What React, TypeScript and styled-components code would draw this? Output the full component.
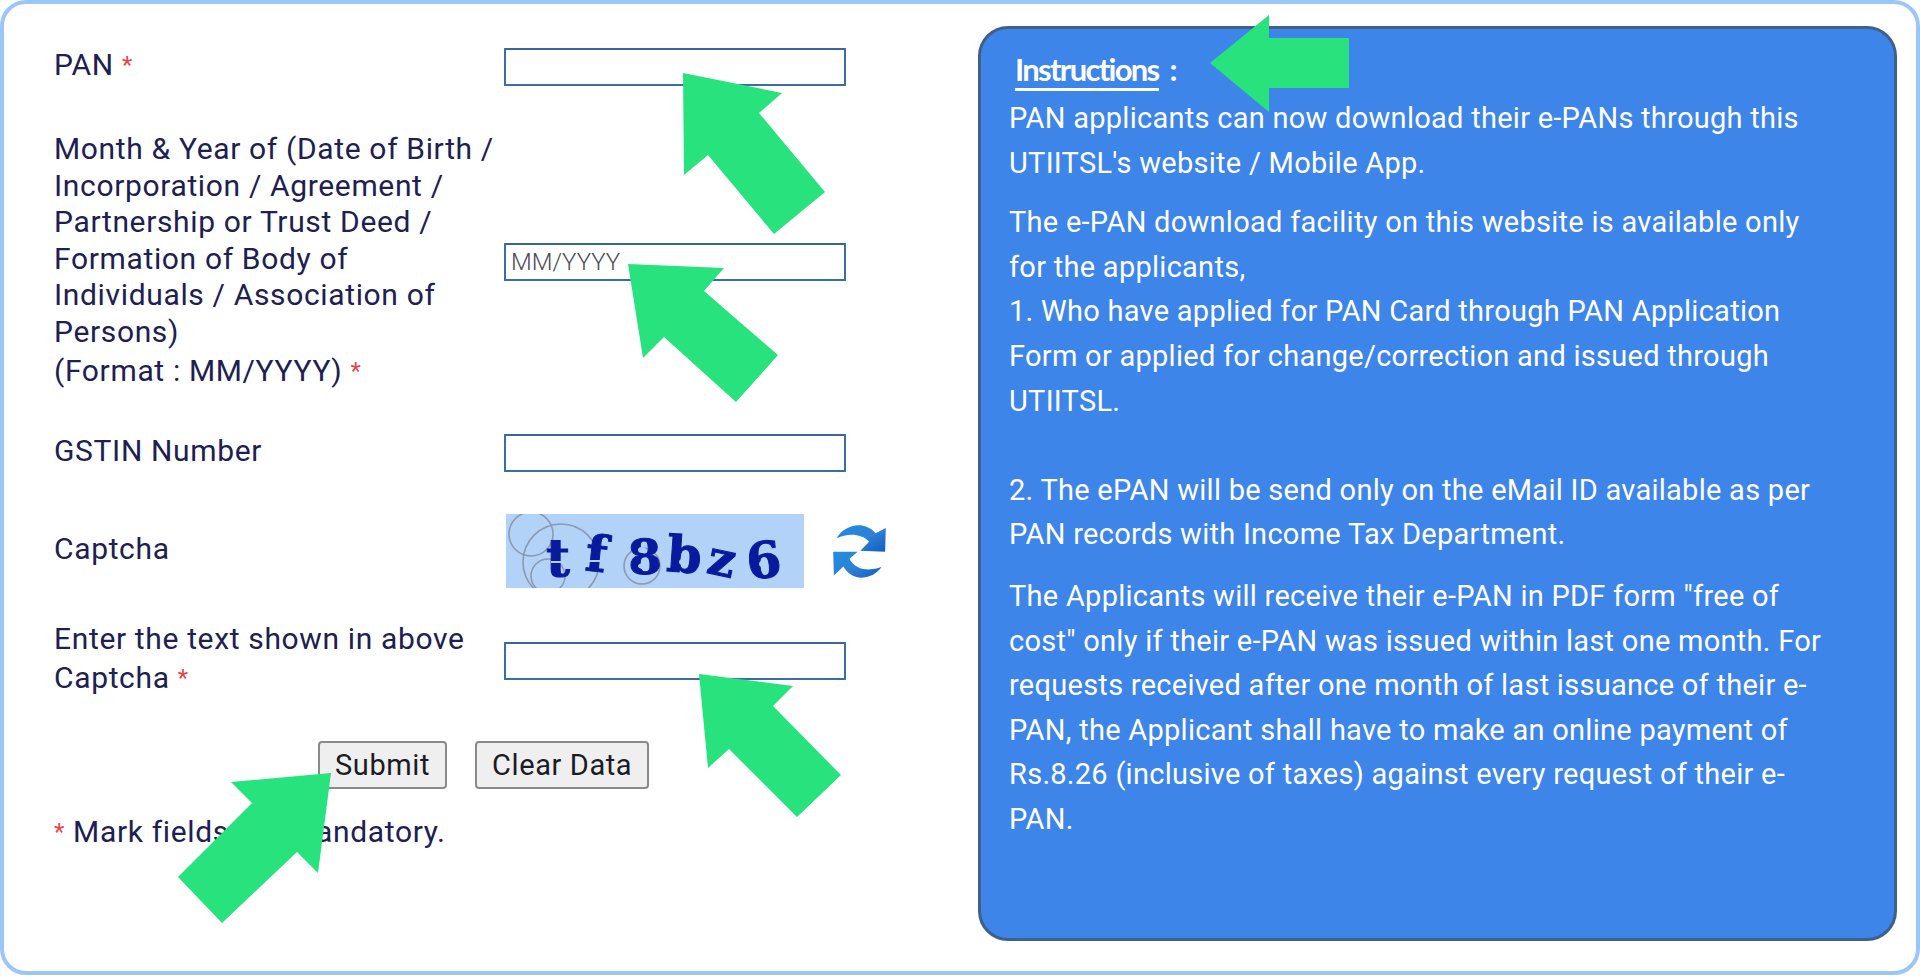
import React from "react";
import styled, { createGlobalStyle } from "styled-components";

const Global = createGlobalStyle`
  html, body { margin: 0; padding: 0; background: #fff; }
  body { font-family: Roboto, "Liberation Sans", sans-serif; }
  * { box-sizing: border-box; }
`;

const Frame = styled.div`
  position: relative;
  width: 1920px;
  height: 975px;
  background: #fff;
  border: 4px solid #9cc6f3;
  border-radius: 26px;
  display: flex;
  align-items: flex-start;
  color: #1d2050;
  font-size: 30px;
  letter-spacing: 0.65px;
`;

const FormColumn = styled.div`
  width: 974px;
  flex: none;
  padding: 44px 0 0 50px;
  display: flex;
  flex-direction: column;
`;

const Row = styled.div<{ $top: number }>`
  display: flex;
  align-items: center;
  margin-top: ${(p) => p.$top}px;
`;

const Label = styled.div`
  width: 450px;
  flex: none;
  margin-top: -4px;
  line-height: 36.6px;
`;

const LastLine = styled.span`
  display: inline-block;
  margin-top: 2px;
`;

const Star = styled.span`
  color: #e5444a;
  font-size: 24px;
  vertical-align: 2px;
`;

const Input = styled.input`
  width: 342px;
  height: 38px;
  padding: 0 5px;
  background: #fff;
  border: 2.5px solid #3b6ea5;
  border-top-color: #3a649b;
  border-radius: 1px;
  font-family: Roboto, sans-serif;
  font-size: 24px;
  font-weight: 300;
  letter-spacing: 0;
  &::placeholder { color: #4a4a58; opacity: 1; }
`;

const CaptchaBox = styled.div`
  display: flex;
  align-items: center;
  gap: 29px;
  margin-left: 2px;
`;

const Actions = styled.div`
  display: flex;
  gap: 28px;
  margin: 45px 0 0 264px;
`;

const Button = styled.button`
  height: 48px;
  padding: 0 15px;
  background: #efefef;
  border: 2px solid #8a8a8a;
  border-radius: 4px;
  color: #1b1b25;
  font-family: Roboto, sans-serif;
  font-size: 29px;
  letter-spacing: 0.6px;
`;

const Note = styled.div`
  margin-top: 25px;
  line-height: 36px;
`;

const Panel = styled.section`
  width: 919px;
  height: 915px;
  flex: none;
  margin-top: 22px;
  padding: 18px 28px 0 28px;
  background: #3d85e8;
  border: 3px solid #3f5f8c;
  border-radius: 30px;
  color: #fff;
  font-size: 29px;
  letter-spacing: 0.27px;
  line-height: 44.6px;
`;

const Heading = styled.div`
  margin-left: 6px;
  font-family: Lato, sans-serif;
  font-size: 31px;
  font-weight: 700;
  letter-spacing: -1.7px;
  line-height: 44px;
  height: 49px;
`;

const HeadingWord = styled.span`
  display: inline-block;
  border-bottom: 3px solid #fff;
  line-height: 37px;
  margin-right: 11px;
`;

const Para = styled.p<{ $gap: number }>`
  margin: ${(p) => p.$gap}px 0 0;
`;

const ArrowLayer = styled.svg`
  position: absolute;
  left: -4px;
  top: -4px;
  pointer-events: none;
`;

const arrows = [
  "683,73 782,93 759,113 825,192 774,234 708,155 684,175",
  "628,264 724,268 704,291 778,355 736,402 664,337 643,358",
  "699,674 793,686 773,706 841,775 797,817 729,749 708,768",
  "331,773 231,782 252,803 178,877 222,923 297,852 318,873",
  "1210,63 1269,15 1269,38 1349,38 1349,88 1269,88 1269,112",
];

const glyphs: [string, number, number, number, number][] = [
  ["t", 40, 62, 0, 52],
  ["f", 80, 58, 6, 50],
  ["8", 122, 60, -3, 48],
  ["b", 161, 58, 4, 50],
  ["z", 203, 62, 12, 48],
  ["6", 240, 64, -6, 50],
];

const CaptchaImage = () => (
  <svg width="298" height="74" viewBox="0 0 298 74" role="img" aria-label="captcha">
    <rect width="298" height="74" fill="#b3d2f7" />
    <g fill="none" stroke="#8a9ab0" strokeWidth="1.6">
      <circle cx="25" cy="20" r="22" />
      <circle cx="55" cy="48" r="38" />
      <circle cx="42" cy="62" r="17" />
      <circle cx="136" cy="52" r="18" />
    </g>
    <g fontFamily="'DejaVu Serif', serif" fontWeight="700" fill="#0a1a9c" stroke="#0a1a9c" strokeWidth="1">
      {glyphs.map(([c, x, y, r, s]) => (
        <text key={c} x={x} y={y} fontSize={s} transform={`rotate(${r} ${x + 15} ${y - 20})`}>
          {c}
        </text>
      ))}
    </g>
    <g fill="#b3d2f7">
      <ellipse cx="136" cy="36" rx="4" ry="3" />
      <ellipse cx="137" cy="52" rx="5" ry="3" />
      <ellipse cx="177" cy="48" rx="4" ry="3" />
      <ellipse cx="257" cy="50" rx="4" ry="3" />
      <rect x="45" y="47" width="22" height="2" />
      <rect x="82" y="46" width="20" height="2" />
    </g>
  </svg>
);

const RefreshIcon = () => (
  <svg width="53" height="56" viewBox="0 0 155 165" aria-label="refresh">
    <defs>
      <linearGradient id="rf" x1="0" y1="0" x2="1" y2="1">
        <stop offset="0" stopColor="#1e8fe0" />
        <stop offset="0.55" stopColor="#2f7fd6" />
        <stop offset="1" stopColor="#0e5fc0" />
      </linearGradient>
    </defs>
    <path fill="url(#rf)" d="M10 45C30 8 88 -12 125 30L155 15L153 85L80 82L106 55C82 30 42 30 10 45Z" />
    <path fill="url(#rf)" d="M142 130C120 165 58 178 30 128L2 155L0 85L72 85L48 105C66 140 108 142 142 130Z" />
  </svg>
);

export default function App() {
  return (
    <>
      <Global />
      <Frame>
        <FormColumn>
          <Row $top={0}>
            <Label>PAN <Star>*</Star></Label>
            <Input />
          </Row>
          <Row $top={49}>
            <Label>
              Month &amp; Year of (Date of Birth /<br />
              Incorporation / Agreement /<br />
              Partnership or Trust Deed /<br />
              Formation of Body of<br />
              Individuals / Association of<br />
              Persons)<br />
              <LastLine>(Format : MM/YYYY) <Star>*</Star></LastLine>
            </Label>
            <Input placeholder="MM/YYYY" />
          </Row>
          <Row $top={45}>
            <Label>GSTIN Number</Label>
            <Input />
          </Row>
          <Row $top={42}>
            <Label>Captcha</Label>
            <CaptchaBox>
              <CaptchaImage />
              <RefreshIcon />
            </CaptchaBox>
          </Row>
          <Row $top={37}>
            <Label>
              Enter the text shown in above<br />
              <LastLine>Captcha <Star>*</Star></LastLine>
            </Label>
            <Input />
          </Row>
          <Actions>
            <Button>Submit</Button>
            <Button>Clear Data</Button>
          </Actions>
          <Note><Star>*</Star> Mark fields are mandatory.</Note>
        </FormColumn>
        <Panel>
          <Heading><HeadingWord>Instructions</HeadingWord>:</Heading>
          <Para $gap={0}>PAN applicants can now download their e-PANs through this<br />UTIITSL's website / Mobile App.</Para>
          <Para $gap={15}>The e-PAN download facility on this website is available only<br />for the applicants,<br />1. Who have applied for PAN Card through PAN Application<br />Form or applied for change/correction and issued through<br />UTIITSL.<br /><br />2. The ePAN will be send only on the eMail ID available as per<br />PAN records with Income Tax Department.</Para>
          <Para $gap={17}>The Applicants will receive their e-PAN in PDF form "free of<br />cost" only if their e-PAN was issued within last one month. For<br />requests received after one month of last issuance of their e-<br />PAN, the Applicant shall have to make an online payment of<br />Rs.8.26 (inclusive of taxes) against every request of their e-<br />PAN.</Para>
        </Panel>
        <ArrowLayer width="1920" height="980" viewBox="0 0 1920 980">
          {arrows.map((p) => (
            <polygon key={p} points={p} fill="#28e37d" />
          ))}
        </ArrowLayer>
      </Frame>
    </>
  );
}
